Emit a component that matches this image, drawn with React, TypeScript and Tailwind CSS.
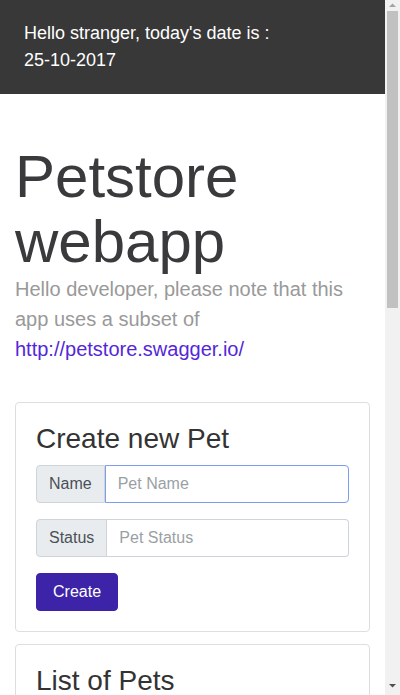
import React from 'react';

const font = { fontFamily: '"Liberation Sans", Arial, sans-serif' };

const Field: React.FC<{ label: string; placeholder: string; active?: boolean }> = ({ label, placeholder, active }) => {
  return (
    <div className="flex h-[38px] mb-4">
      <span className="flex items-center px-3 bg-[#e9ecef] border border-[#ced4da] rounded-l text-base text-[#495057]">
        {label}
      </span>
      <input
        type="text"
        placeholder={placeholder}
        className={
          active
            ? 'flex-1 min-w-0 px-3 border border-[#7d9df0] rounded-r text-base text-[#495057] placeholder-[#9a9fa5] outline-none'
            : 'flex-1 min-w-0 px-3 border border-l-0 border-[#ced4da] rounded-r text-base text-[#495057] placeholder-[#9a9fa5] outline-none'
        }
      />
    </div>
  );
};

// browser-like scrollbar strip on the right edge
const Scrollbar: React.FC = () => (
  <div className="fixed top-0 right-0 h-screen w-[15px] bg-[#f1f1f1] flex flex-col items-center">
    <svg width="15" height="11" viewBox="0 0 15 11" className="shrink-0">
      <path d="M4 7 L7.5 3.5 L11 7 Z" fill="#a3a3a3" />
    </svg>
    <div className="w-[11px] h-[297px] bg-[#c1c1c1]" />
    <div className="flex-1" />
    <svg width="15" height="11" viewBox="0 0 15 11" className="shrink-0 mb-[4px]">
      <path d="M4 4 L7.5 7.5 L11 4 Z" fill="#505050" />
    </svg>
  </div>
);

const App: React.FC = () => {
  return (
    <div className="bg-white text-[#3a3a3c] w-[385px]" style={font}>
      {/* Top bar */}
      <header className="bg-[#383838] text-white px-6 pt-[20px] pb-[20px] text-[18px] leading-[27px]">
        <p>Hello stranger, today's date is :</p>
        <p>25-10-2017</p>
      </header>

      <main className="px-[15px] pt-[50px] pb-10">
        <h1 className="text-[60px] leading-[65px] font-light text-[#3a3a3c]">Petstore webapp</h1>
        <p className="text-[20px] leading-[30px] text-[#999999]">
          Hello developer, please note that this app uses a subset of{' '}
          <a href="#" className="text-[#5327d9]">
            http://petstore.swagger.io/
          </a>
        </p>

        {/* Create card */}
        <div className="mt-[38px] border border-[#dedede] rounded p-5">
          <h3 className="text-[28px] leading-[31px] mb-[11px] text-[#333333]">Create new Pet</h3>
          <Field label="Name" placeholder="Pet Name" active />
          <Field label="Status" placeholder="Pet Status" />
          <button className="h-[38px] px-4 rounded bg-[#3d23a7] text-white text-base border border-[#3d23a7]">
            Create
          </button>
        </div>

        {/* List card */}
        <div className="mt-3 border border-[#dedede] rounded p-5 min-h-[830px]">
          <h3 className="text-[28px] leading-[31px] mb-[11px] text-[#333333]">List of Pets</h3>
        </div>
      </main>
      <Scrollbar />
    </div>
  );
};

export default App;
